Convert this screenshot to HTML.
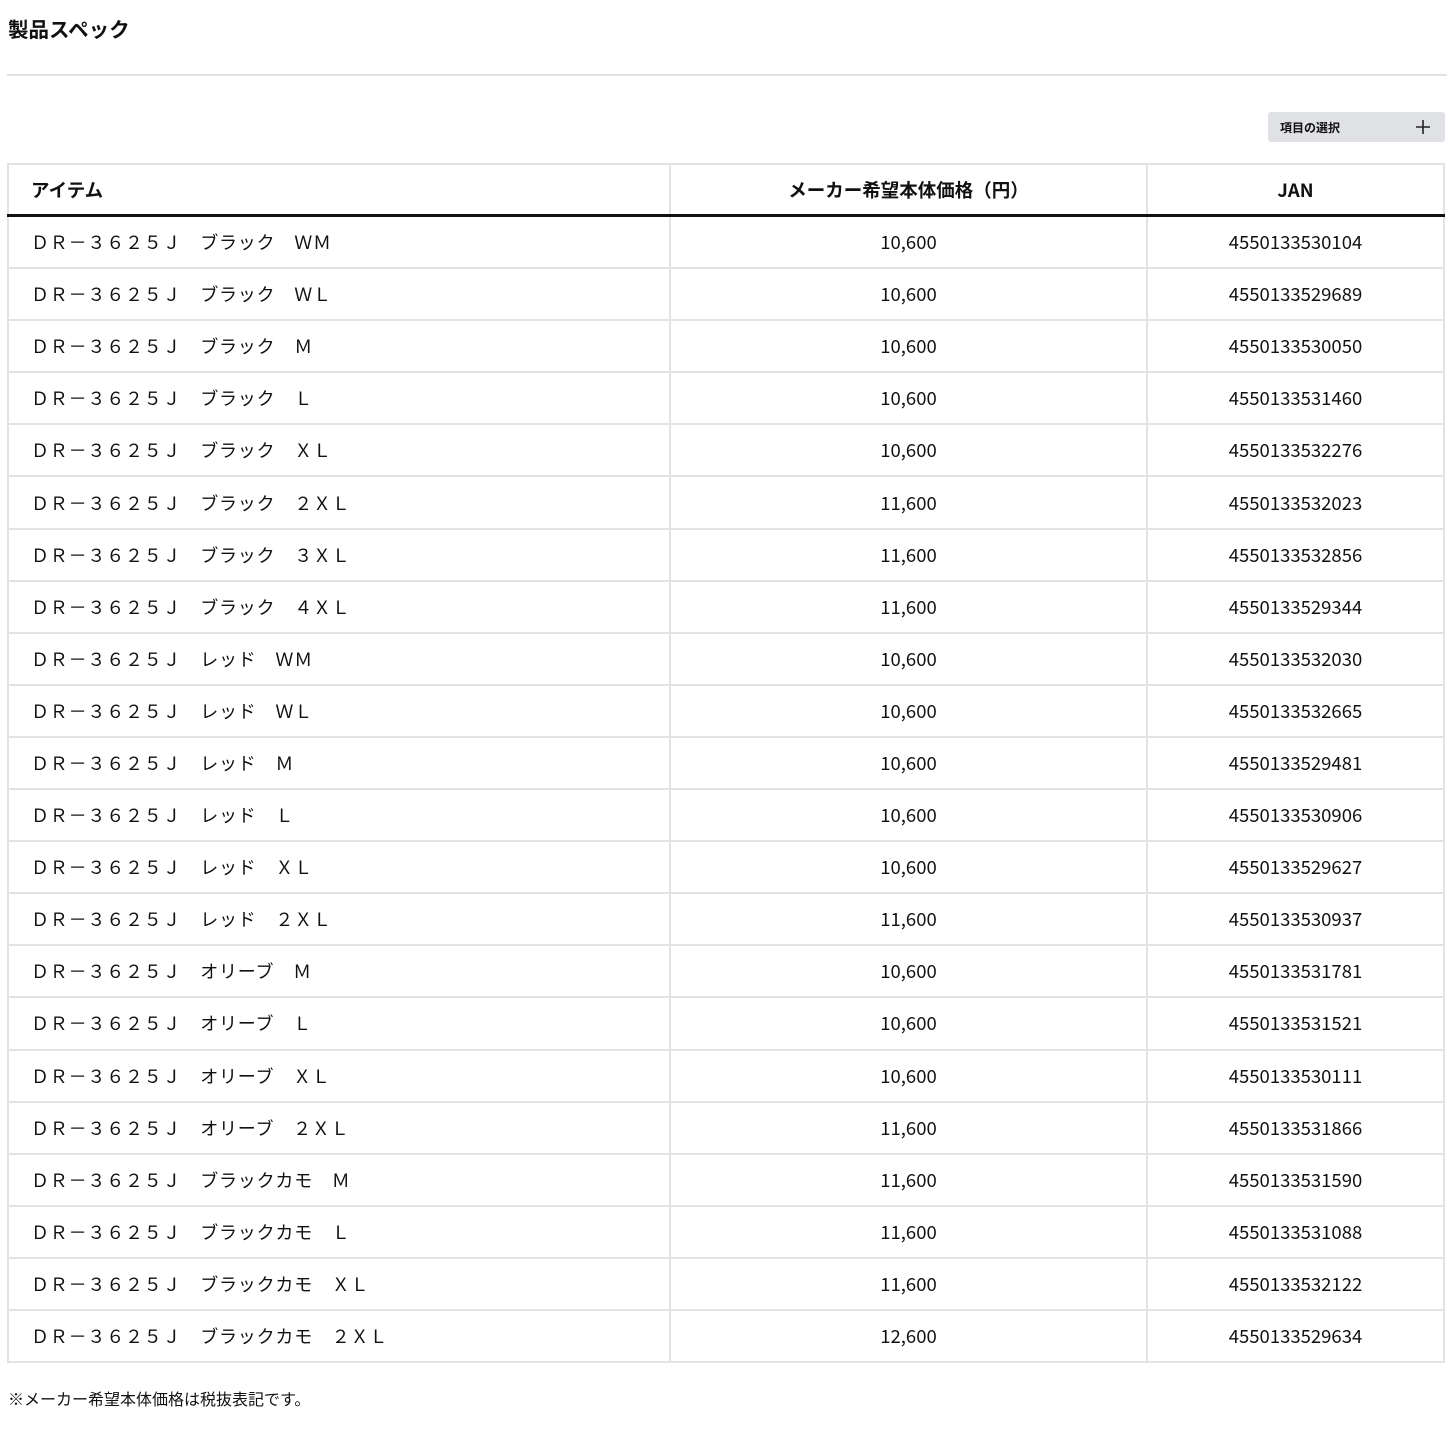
<!DOCTYPE html>
<html><head><meta charset="utf-8"><style>
body{margin:0;background:#fff;font-family:"Liberation Sans","Noto Sans CJK JP",sans-serif;color:#111;}
.t{position:absolute;left:8px;top:13px;font-size:20.5px;font-weight:bold;}
.hr{position:absolute;left:7px;top:74px;width:1440px;height:2px;background:#e3e3e3;}
.btn{position:absolute;left:1268px;top:112px;width:177px;height:30px;background:#dfe1e5;border-radius:3px;font-size:12px;font-weight:bold;}
.btn span{position:absolute;left:12px;top:7px;}
.btn svg{position:absolute;right:14px;top:7px;}
table{position:absolute;left:7px;top:163px;width:1438px;border-collapse:collapse;border:2px solid #e3e3e3;font-family:"Noto Sans CJK JP",sans-serif;}
th,td{height:50.1px;border:2px solid #e3e3e3;font-size:18.5px;text-align:center;padding:0;}
th{border-bottom:3px solid #111;font-weight:bold;height:49px;font-size:18.5px;}
td.i,th.i{text-align:left;padding-left:22px;}
td.i{letter-spacing:0.8px;font-size:18px;}
.f{position:absolute;left:8px;top:1386px;font-size:16px;}
</style></head><body>
<div class="t">製品スペック</div>
<div class="hr"></div>
<div class="btn"><span>項目の選択</span><svg width="16" height="16" viewBox="0 0 16 16"><path d="M8 1V15M1 8H15" stroke="#222" stroke-width="1.6"/></svg></div>
<table>
<tr><th class="i" style="width:638px">アイテム</th><th style="width:475px">メーカー希望本体価格（円）</th><th>JAN</th></tr>
<tr><td class="i">ＤＲ－３６２５Ｊ　ブラック　ＷＭ</td><td>10,600</td><td>4550133530104</td></tr>
<tr><td class="i">ＤＲ－３６２５Ｊ　ブラック　ＷＬ</td><td>10,600</td><td>4550133529689</td></tr>
<tr><td class="i">ＤＲ－３６２５Ｊ　ブラック　Ｍ</td><td>10,600</td><td>4550133530050</td></tr>
<tr><td class="i">ＤＲ－３６２５Ｊ　ブラック　Ｌ</td><td>10,600</td><td>4550133531460</td></tr>
<tr><td class="i">ＤＲ－３６２５Ｊ　ブラック　ＸＬ</td><td>10,600</td><td>4550133532276</td></tr>
<tr><td class="i">ＤＲ－３６２５Ｊ　ブラック　２ＸＬ</td><td>11,600</td><td>4550133532023</td></tr>
<tr><td class="i">ＤＲ－３６２５Ｊ　ブラック　３ＸＬ</td><td>11,600</td><td>4550133532856</td></tr>
<tr><td class="i">ＤＲ－３６２５Ｊ　ブラック　４ＸＬ</td><td>11,600</td><td>4550133529344</td></tr>
<tr><td class="i">ＤＲ－３６２５Ｊ　レッド　ＷＭ</td><td>10,600</td><td>4550133532030</td></tr>
<tr><td class="i">ＤＲ－３６２５Ｊ　レッド　ＷＬ</td><td>10,600</td><td>4550133532665</td></tr>
<tr><td class="i">ＤＲ－３６２５Ｊ　レッド　Ｍ</td><td>10,600</td><td>4550133529481</td></tr>
<tr><td class="i">ＤＲ－３６２５Ｊ　レッド　Ｌ</td><td>10,600</td><td>4550133530906</td></tr>
<tr><td class="i">ＤＲ－３６２５Ｊ　レッド　ＸＬ</td><td>10,600</td><td>4550133529627</td></tr>
<tr><td class="i">ＤＲ－３６２５Ｊ　レッド　２ＸＬ</td><td>11,600</td><td>4550133530937</td></tr>
<tr><td class="i">ＤＲ－３６２５Ｊ　オリーブ　Ｍ</td><td>10,600</td><td>4550133531781</td></tr>
<tr><td class="i">ＤＲ－３６２５Ｊ　オリーブ　Ｌ</td><td>10,600</td><td>4550133531521</td></tr>
<tr><td class="i">ＤＲ－３６２５Ｊ　オリーブ　ＸＬ</td><td>10,600</td><td>4550133530111</td></tr>
<tr><td class="i">ＤＲ－３６２５Ｊ　オリーブ　２ＸＬ</td><td>11,600</td><td>4550133531866</td></tr>
<tr><td class="i">ＤＲ－３６２５Ｊ　ブラックカモ　Ｍ</td><td>11,600</td><td>4550133531590</td></tr>
<tr><td class="i">ＤＲ－３６２５Ｊ　ブラックカモ　Ｌ</td><td>11,600</td><td>4550133531088</td></tr>
<tr><td class="i">ＤＲ－３６２５Ｊ　ブラックカモ　ＸＬ</td><td>11,600</td><td>4550133532122</td></tr>
<tr><td class="i">ＤＲ－３６２５Ｊ　ブラックカモ　２ＸＬ</td><td>12,600</td><td>4550133529634</td></tr>
</table>
<div class="f">※メーカー希望本体価格は税抜表記です。</div>
</body></html>
